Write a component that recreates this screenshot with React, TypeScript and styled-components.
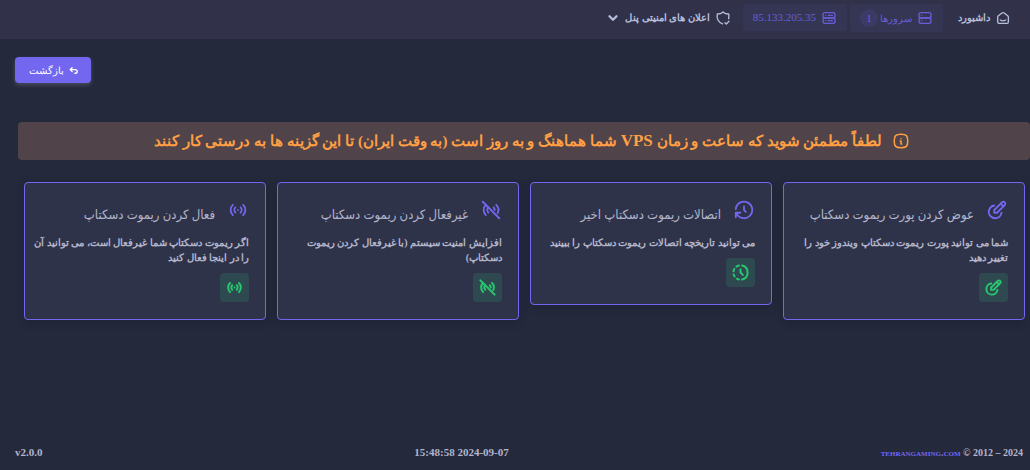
import React from "react";
import styled, { createGlobalStyle } from "styled-components";
import {
  TbAccessPoint,
  TbAccessPointOff,
  TbArrowBackUp,
  TbChevronDown,
  TbEditCircle,
  TbHistory,
  TbHistoryToggle,
  TbInfoSquareRounded,
  TbServer,
  TbServer2,
  TbShieldCheck,
  TbSmartHome,
} from "react-icons/tb";
import type { IconType } from "react-icons";

const color = {
  page: "#25293c",
  surface: "#2f3349",
  bar: "#31324a",
  primary: "#7367f0",
  text: "#b6bedb",
  body: "#b3b5cb",
  warning: "#ff9f43",
  success: "#28c76f",
};

const GlobalStyle = createGlobalStyle`
  *, *::before, *::after { box-sizing: border-box; }
  body {
    margin: 0;
    background: ${color.page};
    color: ${color.text};
    font-family: "Liberation Serif", sans-serif;
    font-size: 10px;
    line-height: 15px;
  }
  svg { display: block; flex: none; }
`;

const Page = styled.div`
  min-height: 100vh;
  display: flex;
  flex-direction: column;
`;

const Navbar = styled.nav`
  display: flex;
  align-items: flex-start;
  height: 39px;
  padding: 4px 19px 0;
  background: ${color.bar};
`;

const NavLink = styled.a`
  display: flex;
  align-items: center;
  gap: 5px;
  height: 27px;
  color: ${color.text};
  font-weight: bold;
  text-decoration: none;
  white-space: nowrap;
`;

const NavPill = styled(NavLink)<{ $start: number; $tall?: boolean }>`
  height: ${(p) => (p.$tall ? 28 : 27)}px;
  padding: 0 10px;
  margin-inline-start: ${(p) => p.$start}px;
  border-radius: 4px;
  background: #353654;
  color: #675dd8;
  font-weight: normal;
`;

const PillLabel = styled.span`
  display: flex;
  align-items: center;
  gap: 2px;
`;

const Address = styled.bdi`
  font-size: 11px;
`;

const Count = styled.span`
  display: grid;
  place-items: center;
  width: 18px;
  height: 18px;
  border-radius: 50%;
  background: #3d3a66;
  font-size: 11px;
`;

const NavMenu = styled.button`
  display: flex;
  align-items: center;
  gap: 5px;
  height: 27px;
  margin-inline-start: 12px;
  padding: 0;
  border: 0;
  background: none;
  color: ${color.text};
  font: inherit;
  font-weight: bold;
  white-space: nowrap;
`;

const Main = styled.main`
  flex: 1;
  display: flex;
  flex-direction: column;
`;

const Actions = styled.div`
  display: flex;
  justify-content: flex-end;
  padding: 18px 15px 39px;
`;

const BackButton = styled.button`
  display: flex;
  align-items: center;
  gap: 4px;
  height: 26px;
  padding: 0 12px 0 14px;
  border: 0;
  border-radius: 4px;
  background: ${color.primary};
  box-shadow: 0 2px 4px rgba(165, 163, 174, 0.3);
  color: #fff;
  font: inherit;
`;

const Alert = styled.div`
  display: flex;
  align-items: center;
  justify-content: center;
  gap: 10px;
  min-height: 38px;
  margin-left: 18px;
  padding-left: 16px;
  border-radius: 4px;
  background: #50444a;
  color: ${color.warning};
`;

const AlertText = styled.h1`
  margin: 0;
  font-size: 15px;
  line-height: 24px;
  font-weight: bold;
`;

const Latin = styled.bdi`
  font-size: 17px;
`;

const Cards = styled.section`
  display: grid;
  grid-template-columns: repeat(4, minmax(0, 1fr));
  align-items: start;
  gap: 11px;
  padding: 22px 5px 0 24px;
`;

const Card = styled.article`
  padding: 16px 16px 17px 8px;
  border: 1px solid ${color.primary};
  border-radius: 4px;
  background: ${color.surface};
  box-shadow: 0 2px 8px rgba(15, 20, 34, 0.3);
`;

const CardHead = styled.header`
  display: flex;
  gap: 12px;
  height: 36px;
  color: ${color.primary};
`;

const CardTitle = styled.h2`
  margin: 4px 0 0;
  color: ${color.body};
  font-family: "Liberation Serif", "DejaVu Sans Condensed", sans-serif;
  font-size: 13px;
  line-height: 24px;
  font-weight: normal;
  white-space: nowrap;
`;

const CardText = styled.p`
  margin: 0 0 8px;
  color: ${color.body};
  font-weight: bold;
`;

const CardAction = styled.a`
  display: grid;
  place-items: center;
  width: 29px;
  height: 29px;
  border-radius: 4px;
  background: #2e4a50;
  color: ${color.success};
`;

const Footer = styled.footer`
  display: flex;
  justify-content: space-between;
  padding: 0 7px 10px 15px;
  color: ${color.body};
  font-size: 11px;
  font-weight: bold;
`;

const Copyright = styled.span`
  font-size: 10px;
`;

const SiteLink = styled.a`
  color: ${color.primary};
  font-variant: small-caps;
  text-decoration: none;
`;

type Feature = { title: string; text: string; icon: IconType; action: IconType };

const features: Feature[] = [
  {
    title: "عوض کردن پورت ریموت دسکتاپ",
    text: "شما می توانید پورت ریموت دسکتاپ ویندوز خود را تغییر دهید",
    icon: TbEditCircle,
    action: TbEditCircle,
  },
  {
    title: "اتصالات ریموت دسکتاپ اخیر",
    text: "می توانید تاریخچه اتصالات ریموت دسکتاپ را ببینید",
    icon: TbHistory,
    action: TbHistoryToggle,
  },
  {
    title: "غیرفعال کردن ریموت دسکتاپ",
    text: "افزایش امنیت سیستم (با غیرفعال کردن ریموت دسکتاپ)",
    icon: TbAccessPointOff,
    action: TbAccessPointOff,
  },
  {
    title: "فعال کردن ریموت دسکتاپ",
    text: "اگر ریموت دسکتاپ شما غیرفعال است، می توانید آن را در اینجا فعال کنید",
    icon: TbAccessPoint,
    action: TbAccessPoint,
  },
];

export default function App() {
  return (
    <Page dir="rtl" lang="fa">
      <GlobalStyle />
      <Navbar>
        <NavLink href="#dashboard">
          <TbSmartHome size={16} />
          داشبورد
        </NavLink>
        <NavPill href="#servers" $start={15} $tall>
          <TbServer size={16} />
          <PillLabel>
            سرورها
            <Count>1</Count>
          </PillLabel>
        </NavPill>
        <NavPill href="#server" $start={3}>
          <TbServer2 size={16} />
          <Address>85.133.205.35</Address>
        </NavPill>
        <NavMenu type="button">
          <TbShieldCheck size={16} />
          اعلان های امنیتی پنل
          <TbChevronDown size={14} strokeWidth={4} />
        </NavMenu>
      </Navbar>
      <Main>
        <Actions>
          <BackButton type="button">
            <TbArrowBackUp size={11} strokeWidth={3} />
            بازگشت
          </BackButton>
        </Actions>
        <Alert role="alert">
          <TbInfoSquareRounded size={18} />
          <AlertText>
            لطفاً مطمئن شوید که ساعت و زمان <Latin>VPS</Latin> شما هماهنگ و به روز است (به وقت ایران) تا این گزینه ها به درستی کار کنند
          </AlertText>
        </Alert>
        <Cards>
          {features.map(({ title, text, icon: Icon, action: Action }) => (
            <Card key={title}>
              <CardHead>
                <Icon size={22} />
                <CardTitle>{title}</CardTitle>
              </CardHead>
              <CardText>{text}</CardText>
              <CardAction href="#open" aria-label={title}>
                <Action size={19} strokeWidth={2.5} />
              </CardAction>
            </Card>
          ))}
        </Cards>
      </Main>
      <Footer>
        <Copyright dir="ltr">
          <SiteLink href="#site">tehrangaming.com</SiteLink> © 2012 – 2024
        </Copyright>
        <time dir="ltr">15:48:58 2024-09-07</time>
        <span dir="ltr">v2.0.0</span>
      </Footer>
    </Page>
  );
}
